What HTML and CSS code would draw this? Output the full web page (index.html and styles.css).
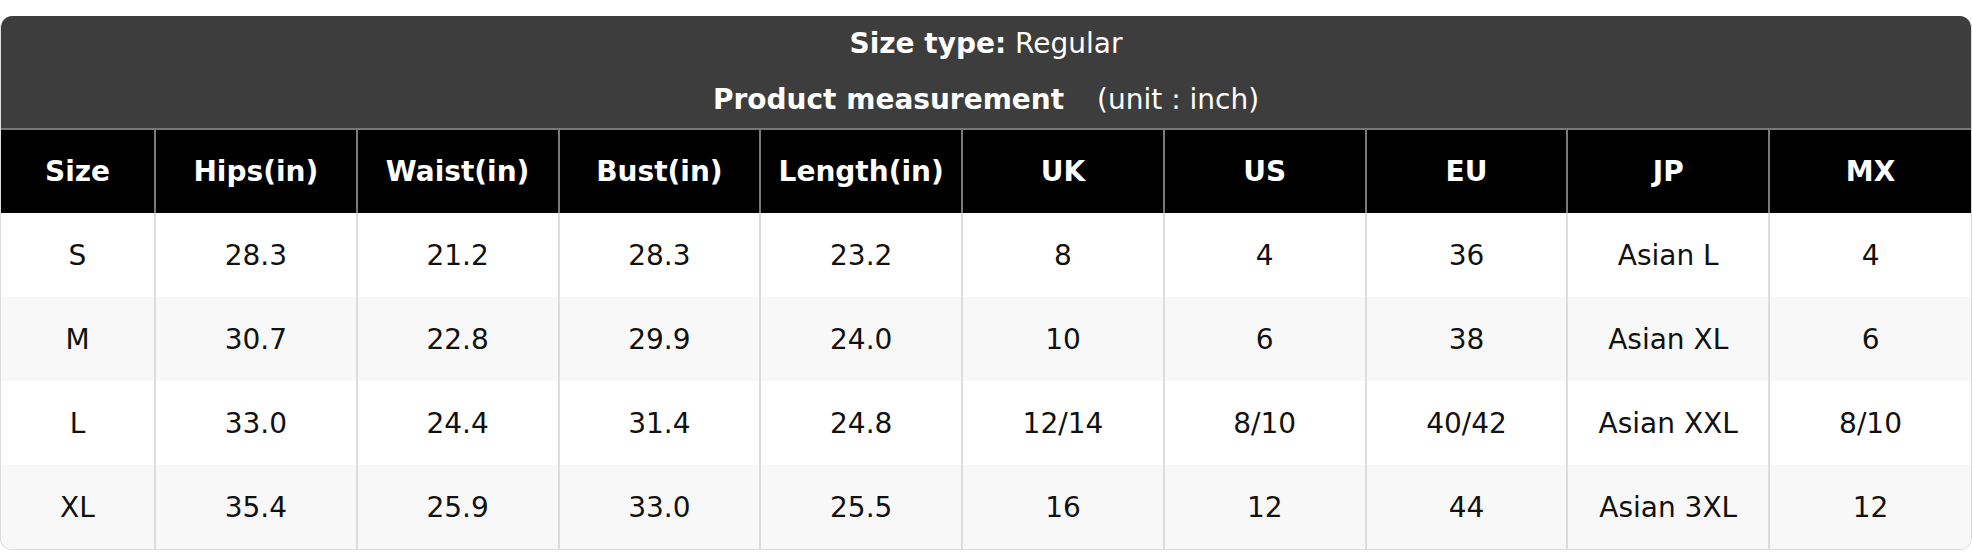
FILE: index.html
```html
<!DOCTYPE html>
<html>
<head>
<meta charset="utf-8">
<link rel="stylesheet" href="styles.css">
</head>
<body>
<div class="chart">
  <div class="title">
    <div class="title-line"><b>Size type:</b> Regular</div>
    <div class="title-line"><b>Product measurement</b> <span class="unit">(unit : inch)</span></div>
  </div>
  <table class="size-table">
    <colgroup>
      <col class="col-first">
      <col><col><col><col><col><col><col><col><col>
    </colgroup>
    <thead>
      <tr>
        <th>Size</th><th>Hips(in)</th><th>Waist(in)</th><th>Bust(in)</th><th>Length(in)</th><th>UK</th><th>US</th><th>EU</th><th>JP</th><th>MX</th>
      </tr>
    </thead>
    <tbody>
      <tr><td>S</td><td>28.3</td><td>21.2</td><td>28.3</td><td>23.2</td><td>8</td><td>4</td><td>36</td><td>Asian L</td><td>4</td></tr>
      <tr><td>M</td><td>30.7</td><td>22.8</td><td>29.9</td><td>24.0</td><td>10</td><td>6</td><td>38</td><td>Asian XL</td><td>6</td></tr>
      <tr><td>L</td><td>33.0</td><td>24.4</td><td>31.4</td><td>24.8</td><td>12/14</td><td>8/10</td><td>40/42</td><td>Asian XXL</td><td>8/10</td></tr>
      <tr><td>XL</td><td>35.4</td><td>25.9</td><td>33.0</td><td>25.5</td><td>16</td><td>12</td><td>44</td><td>Asian 3XL</td><td>12</td></tr>
    </tbody>
  </table>
</div>
</body>
</html>
```
FILE: styles.css
```css
html, body {
  margin: 0;
  padding: 0;
  background: #ffffff;
}
body {
  padding-top: 16px;
  font-family: "DejaVu Sans", "Liberation Sans", sans-serif;
}
.chart {
  width: 1972px;
  box-sizing: border-box;
  border: 1px solid #dcdcdc;
  border-top: none;
  border-radius: 12px;
  overflow: hidden;
}
.title {
  background: #3d3d3d;
  color: #ffffff;
  font-size: 28px;
  text-align: center;
}
.title-line {
  height: 56px;
  line-height: 56px;
}
.unit {
  margin-left: 24px;
}
.size-table {
  width: 100%;
  border-collapse: collapse;
  table-layout: fixed;
  font-size: 28px;
}
.col-first {
  width: 154px;
}
.size-table th {
  background: #000000;
  color: #ffffff;
  font-weight: bold;
  height: 83px;
  padding: 0;
  border-top: 2px solid #777777;
  border-left: 2px solid #7a7a7a;
  text-align: center;
  vertical-align: middle;
}
.size-table th:first-child {
  border-left: none;
}
.size-table td {
  height: 84px;
  padding: 0;
  color: #111111;
  text-align: center;
  vertical-align: middle;
  border-left: 2px solid #dddddd;
}
.size-table td:first-child {
  border-left: none;
}
.size-table tbody tr:nth-child(even) td {
  background: #f8f8f8;
}
```
